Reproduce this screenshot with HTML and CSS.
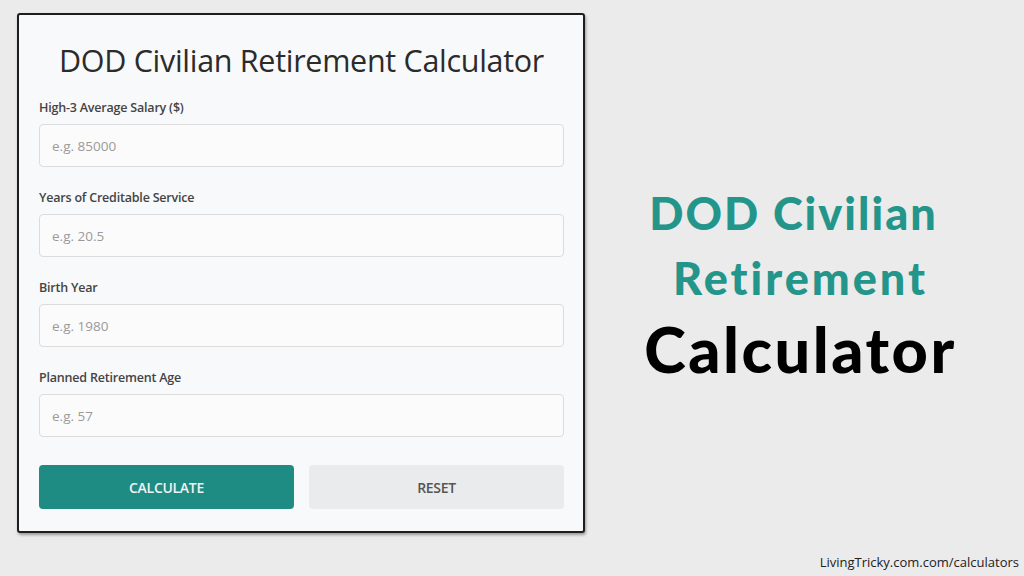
FILE: index.html
```html
<!DOCTYPE html>
<html>
<head>
<meta charset="utf-8">
<link rel="stylesheet" href="styles.css">
</head>
<body>
<div class="page">
  <div class="card">
    <h1 class="title">DOD Civilian Retirement Calculator</h1>
    <div class="field">
      <label class="label">High-3 Average Salary ($)</label>
      <input class="input" type="text" placeholder="e.g. 85000">
    </div>
    <div class="field">
      <label class="label">Years of Creditable Service</label>
      <input class="input" type="text" placeholder="e.g. 20.5">
    </div>
    <div class="field">
      <label class="label">Birth Year</label>
      <input class="input" type="text" placeholder="e.g. 1980">
    </div>
    <div class="field">
      <label class="label">Planned Retirement Age</label>
      <input class="input" type="text" placeholder="e.g. 57">
    </div>
    <div class="buttons">
      <button class="btn btn-calc">CALCULATE</button>
      <button class="btn btn-reset">RESET</button>
    </div>
  </div>
  <div class="hero">
    <div class="hero-teal hero-first">DOD Civilian</div>
    <div class="hero-teal hero-second">Retirement</div>
    <div class="hero-black">Calculator</div>
  </div>
</div>
<div class="footer">LivingTricky.com.com/calculators</div>
</body>
</html>
```
FILE: styles.css
```css
html, body {
  margin: 0;
  padding: 0;
}
body {
  width: 1024px;
  height: 576px;
  background: #ebebeb;
  font-family: "Open Sans", "Noto Sans", sans-serif;
  position: relative;
  overflow: hidden;
}
.page {
  display: flex;
  align-items: flex-start;
  padding: 13px 0 0 17px;
}
.card {
  width: 568px;
  height: 520px;
  box-sizing: border-box;
  background: #f8f9fa;
  border: 2px solid #1e1e1e;
  border-radius: 3px;
  box-shadow: 1px 2px 3px rgba(0,0,0,0.35);
  padding: 25px 19px 0 20px;
}
.title {
  margin: 0 0 19px 0;
  font-size: 30.5px;
  font-weight: 400;
  color: #2b2b2b;
  text-align: center;
  letter-spacing: -0.3px;
  line-height: 40px;
}
.field {
  display: flex;
  flex-direction: column;
  margin-bottom: 22px;
}
.label {
  font-size: 12.5px;
  font-weight: 600;
  color: #444;
  line-height: 18px;
  margin-bottom: 7px;
  letter-spacing: -0.2px;
}
.input {
  height: 43px;
  box-sizing: border-box;
  border: 1px solid #dcdcdc;
  border-radius: 4px;
  background: #fbfbfb;
  padding: 0 12px;
  font-family: "Open Sans", sans-serif;
  font-size: 13.5px;
  color: #333;
  outline: none;
}
.input::placeholder {
  color: #9a9a9a;
}
.buttons {
  display: flex;
  gap: 15px;
  margin-top: 28px;
}
.btn {
  flex: 1;
  height: 44px;
  border: none;
  border-radius: 4px;
  font-family: "Open Sans", sans-serif;
  font-size: 14px;
  font-weight: 600;
  letter-spacing: -0.3px;
}
.btn-calc {
  background: #1e8c82;
  color: #f2f2f2;
}
.btn-reset {
  background: #e9ebec;
  color: #555;
}
.hero {
  flex: 1;
  display: flex;
  flex-direction: column;
  align-items: center;
  padding-top: 168px;
  padding-right: 8px;
}
.hero-teal {
  font-family: "Lato", sans-serif;
  font-weight: 900;
  font-size: 45px;
  color: #24958a;
  line-height: 65px;
  letter-spacing: 2px;
}
.hero-first {
  margin-right: 14px;
}
.hero-second {
  letter-spacing: 3px;
}
.hero-black {
  font-family: "Lato", sans-serif;
  font-weight: 900;
  font-size: 63px;
  color: #000;
  line-height: 76px;
  letter-spacing: 2.5px;
}
.footer {
  position: absolute;
  right: 5px;
  bottom: 5px;
  font-family: "Open Sans", sans-serif;
  font-size: 13px;
  color: #222;
}
```
